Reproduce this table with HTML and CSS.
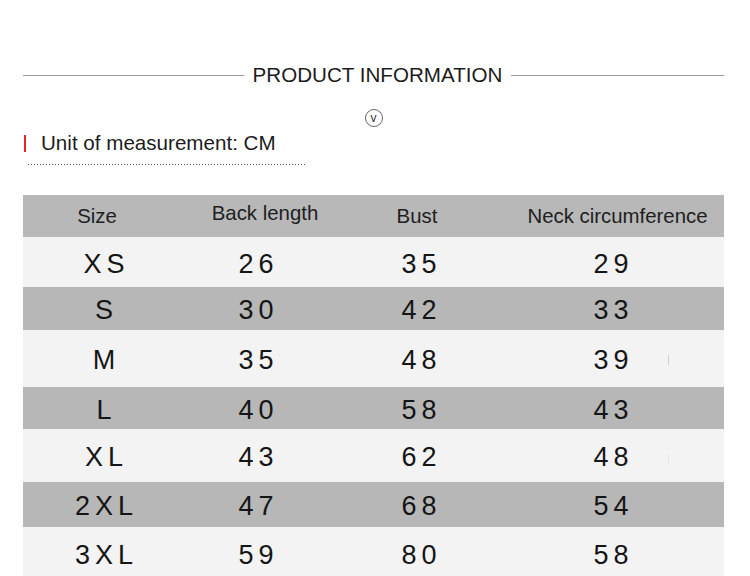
FILE: index.html
```html
<!DOCTYPE html>
<html lang="en">
<head>
<meta charset="utf-8">
<title>Product information</title>
<link rel="stylesheet" href="styles.css">
</head>
<body>
<div class="page">
  <div class="title-row">
    <span class="rule rule-left"></span>
    <h1 class="title">PRODUCT INFORMATION</h1>
    <span class="rule"></span>
  </div>
  <div class="badge-row"><span class="badge">v</span></div>
  <div class="unit-row">
    <span class="red-bar"></span>
    <span class="unit-text">Unit of measurement: CM</span>
  </div>
  <div class="dots"></div>

  <div class="table">
    <div class="row head">
      <div class="cell">Size</div>
      <div class="cell raised">Back length</div>
      <div class="cell">Bust</div>
      <div class="cell neck">Neck circumference</div>
    </div>
    <div class="row data light">
      <div class="cell">XS</div><div class="cell">26</div><div class="cell">35</div><div class="cell neck">29</div>
    </div>
    <div class="row data gray">
      <div class="cell">S</div><div class="cell">30</div><div class="cell">42</div><div class="cell neck">33</div>
    </div>
    <div class="row data light">
      <div class="cell">M</div><div class="cell">35</div><div class="cell">48</div><div class="cell neck">39</div>
      <span class="tick"></span>
    </div>
    <div class="row data gray">
      <div class="cell">L</div><div class="cell">40</div><div class="cell">58</div><div class="cell neck">43</div>
    </div>
    <div class="row data light">
      <div class="cell">XL</div><div class="cell">43</div><div class="cell">62</div><div class="cell neck">48</div>
      <span class="tick faint"></span>
    </div>
    <div class="row data gray">
      <div class="cell">2XL</div><div class="cell">47</div><div class="cell">68</div><div class="cell neck">54</div>
    </div>
    <div class="row data light">
      <div class="cell">3XL</div><div class="cell">59</div><div class="cell">80</div><div class="cell neck">58</div>
    </div>
  </div>
</div>
</body>
</html>
```

FILE: styles.css
```css
html, body {
  margin: 0;
  padding: 0;
  background: #ffffff;
}

body {
  font-family: "Liberation Sans", Arial, sans-serif;
  color: #1a1a1a;
  width: 750px;
  height: 576px;
  overflow: hidden;
}

.page {
  padding: 64px 26px 0 23px;
}

.title-row {
  display: flex;
  align-items: center;
  gap: 9px;
  height: 22px;
}

.rule {
  flex: 1 0 0;
  height: 1px;
  background: #9a9a9a;
}

.rule-left {
  flex: 1 0 8px;
}

.title {
  margin: 0;
  font-size: 20.6px;
  font-weight: normal;
  line-height: 22px;
  color: #1c1c1c;
  white-space: nowrap;
}

.badge-row {
  display: flex;
  justify-content: center;
  margin-top: 23px;
  height: 18px;
}

.badge {
  width: 16px;
  height: 15px;
  border: 1px solid #666;
  border-radius: 50%;
  display: flex;
  align-items: center;
  justify-content: center;
  font-size: 12px;
  line-height: 1;
  color: #333;
  padding-bottom: 1px;
  box-sizing: content-box;
}

.unit-row {
  display: flex;
  align-items: center;
  margin-top: 4px;
  height: 24px;
  padding-left: 1px;
}

.red-bar {
  width: 2px;
  height: 17px;
  background: #e3262a;
}

.unit-text {
  margin-left: 15px;
  font-size: 20.6px;
  color: #1c1c1c;
  line-height: 24px;
}

.dots {
  margin: 9px 0 0 5px;
  width: 279px;
  height: 1px;
  background-image: linear-gradient(to right, #555 1px, transparent 1px);
  background-size: 3px 1px;
}

.table {
  margin-top: 30px;
  width: 701px;
}

.row {
  display: grid;
  align-items: center;
  position: relative;
}

.head {
  grid-template-columns: 148px 188px 116px 249px;
  height: 42px;
  background: #b8b8b8;
  font-size: 20.4px;
  color: #1e1e1e;
  padding-top: 1px;
  box-sizing: border-box;
}

.head .cell {
  text-align: center;
}

.head .raised {
  margin-bottom: 6px;
}

.head .neck {
  padding-left: 36px;
}

.data {
  grid-template-columns: 162px 142px 184px 213px;
  font-size: 27px;
  letter-spacing: 5px;
  color: #151515;
  padding-top: 4px;
  box-sizing: border-box;
}

.data .cell {
  text-align: center;
  padding-left: 5px;
}

.data .neck {
  padding-right: 13px;
}

.light {
  background: #f3f3f3;
}

.gray {
  background: #b7b7b7;
}

.data:nth-child(2) { height: 50px; }
.data:nth-child(3) { height: 43px; }
.data:nth-child(4) { height: 57px; }
.data:nth-child(5) { height: 42px; }
.data:nth-child(6) { height: 53px; }
.data:nth-child(7) { height: 45px; }
.data:nth-child(8) { height: 52px; }

.tick {
  position: absolute;
  left: 645px;
  top: 25px;
  width: 1px;
  height: 10px;
  background: #cfcfcf;
}

.tick.faint {
  top: 26px;
  height: 8px;
  background: #e2e2e2;
}
```
